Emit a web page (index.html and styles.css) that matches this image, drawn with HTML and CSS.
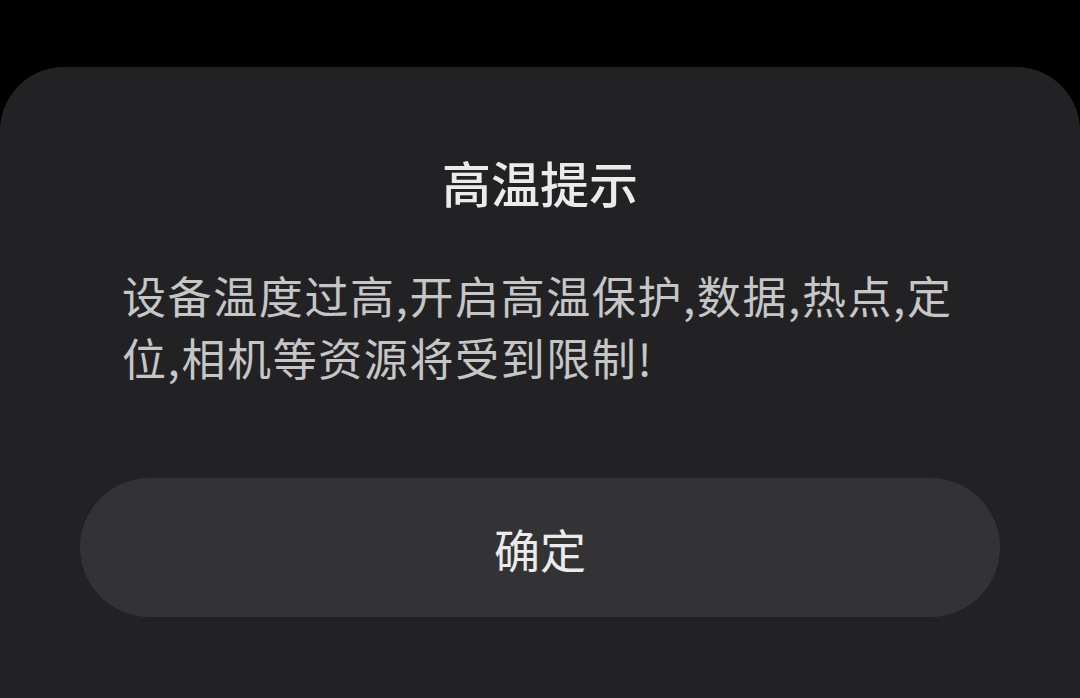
FILE: index.html
```html
<!DOCTYPE html>
<html>
<head>
    <meta http-equiv="Content-Type" content="text/html; charset=utf-8"/>
    <title>高温提示</title>
    <link rel="stylesheet" href="styles.css">
</head>
<body>
<div class="sheet">
    <h1 class="title">高温提示</h1>
    <p class="msg">设备温度过高,开启高温保护,数据,热点,定位,相机等资源将受到限制!</p>
    <div class="btn">确定</div>
</div>
</body>
</html>
```

FILE: styles.css
```css
* {
    margin: 0;
    padding: 0;
}

html, body {
    height: 100%;
}

body {
    background: #000;
    font-family: "Noto Sans CJK SC", "Noto Sans", sans-serif;
    overflow: hidden;
    display: flex;
    flex-direction: column;
}

.sheet {
    margin-top: 67px;
    flex: 1;
    background: #222224;
    border-radius: 64px 64px 0 0;
    padding: 85px 80px 0;
    display: flex;
    flex-direction: column;
}

.title {
    font-size: 49px;
    font-weight: 500;
    line-height: 60px;
    color: #ebebeb;
    text-align: center;
}

.msg {
    margin: 52px 36px 0 42px;
    font-size: 44px;
    line-height: 62px;
    letter-spacing: 1.6px;
    color: #c6c6c6;
}

.btn {
    margin-top: 90px;
    height: 139px;
    border-radius: 70px;
    background: #333335;
    color: #ebebeb;
    font-size: 46px;
    display: flex;
    align-items: center;
    justify-content: center;
}
```
